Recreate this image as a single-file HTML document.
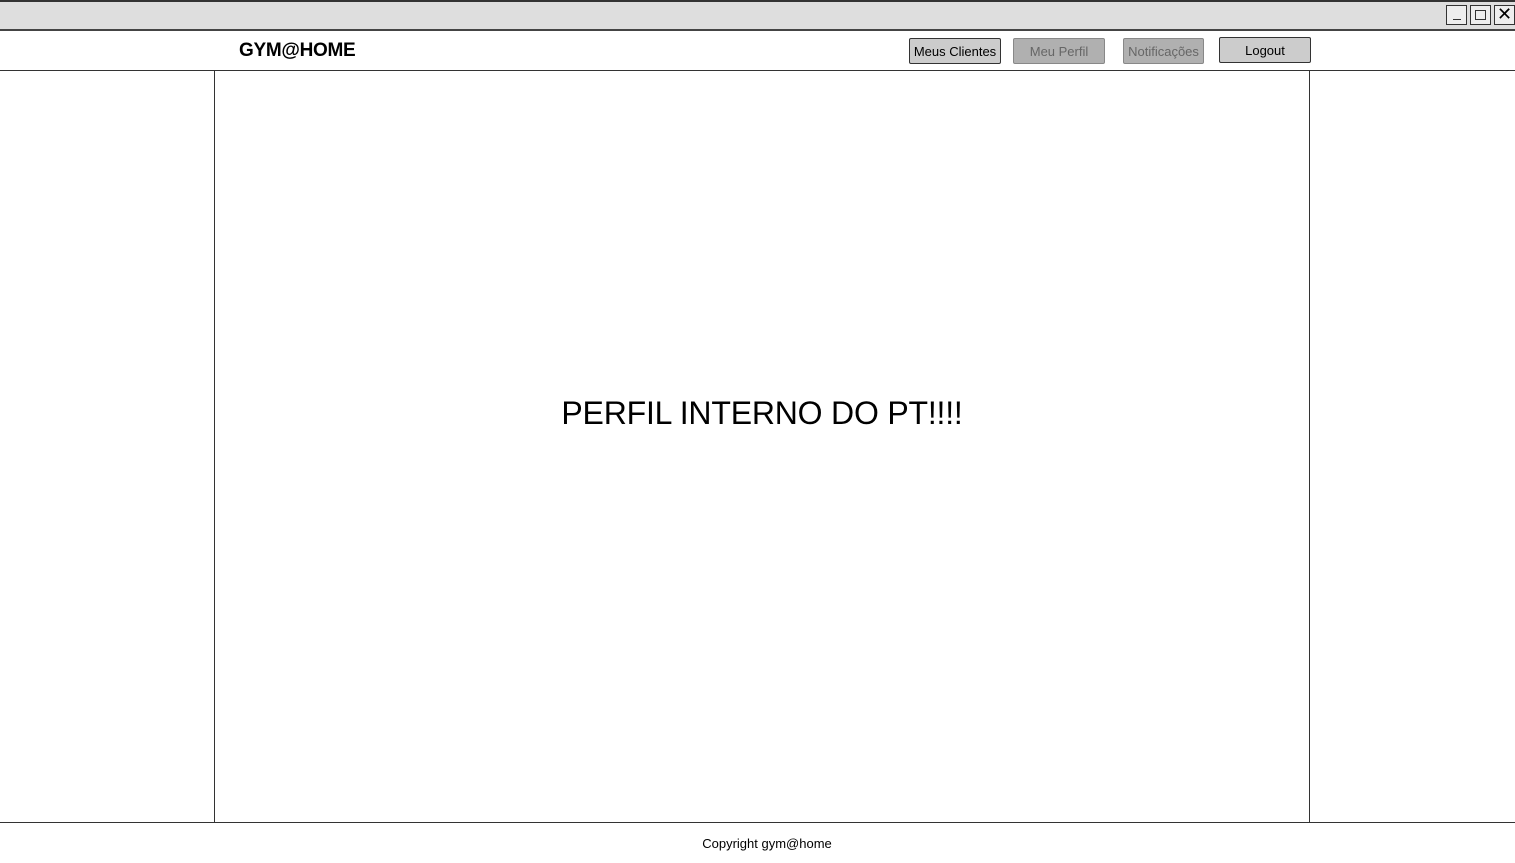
<!DOCTYPE html>
<html><head><meta charset="utf-8"><style>
body{margin:0;width:1515px;height:863px;background:#fff;position:relative;overflow:hidden;font-family:"Comic Sans MS","Liberation Sans",sans-serif;}
.a{position:absolute;box-sizing:border-box}
.btn{position:absolute;box-sizing:border-box;border:1px solid #333;border-radius:2px;text-align:center;font-size:13px;line-height:25px;height:26px}
</style></head><body>
<div class="a" style="left:0;top:0;width:1515px;height:31px;background:#dedede;border-top:2px solid #333;border-bottom:2px solid #444"></div>
<div class="a" style="left:1446px;top:5px;width:21px;height:20px;border:1px solid #333;background:#eee"><div class="a" style="left:6px;top:13px;width:8px;height:1px;background:#333"></div></div>
<div class="a" style="left:1470px;top:5px;width:21px;height:20px;border:1px solid #333;background:#eee"><div class="a" style="left:4px;top:4px;width:11px;height:10px;border:1px solid #333"></div></div>
<div class="a" style="left:1494px;top:5px;width:21px;height:20px;border:1px solid #333;background:#eee;font-size:18px;line-height:17px;text-align:center;font-family:'Liberation Sans',sans-serif">✕</div>
<div class="a" style="left:239px;top:40px;font-size:19px;font-weight:bold;letter-spacing:-0.3px">GYM@HOME</div>
<div class="btn" style="left:909px;top:38px;width:92px;background:#ccc;color:#000">Meus Clientes</div>
<div class="btn" style="left:1013px;top:38px;width:92px;background:#b0b0b0;color:#666;border-color:#888">Meu Perfil</div>
<div class="btn" style="left:1123px;top:38px;width:81px;background:#b0b0b0;color:#666;border-color:#888">Notificações</div>
<div class="btn" style="left:1219px;top:37px;width:92px;background:#ccc;color:#000">Logout</div>
<div class="a" style="left:0;top:70px;width:1515px;height:1px;background:#333"></div>
<div class="a" style="left:214px;top:70px;width:1px;height:753px;background:#333"></div>
<div class="a" style="left:1309px;top:70px;width:1px;height:753px;background:#333"></div>
<div class="a" style="left:0;top:822px;width:1515px;height:1px;background:#333"></div>
<div class="a" style="left:215px;top:395px;width:1094px;text-align:center;font-size:32px;letter-spacing:-0.2px">PERFIL INTERNO DO PT!!!!</div>
<div class="a" style="left:0;top:836px;width:1534px;text-align:center;font-size:13px">Copyright gym@home</div>
</body></html>
